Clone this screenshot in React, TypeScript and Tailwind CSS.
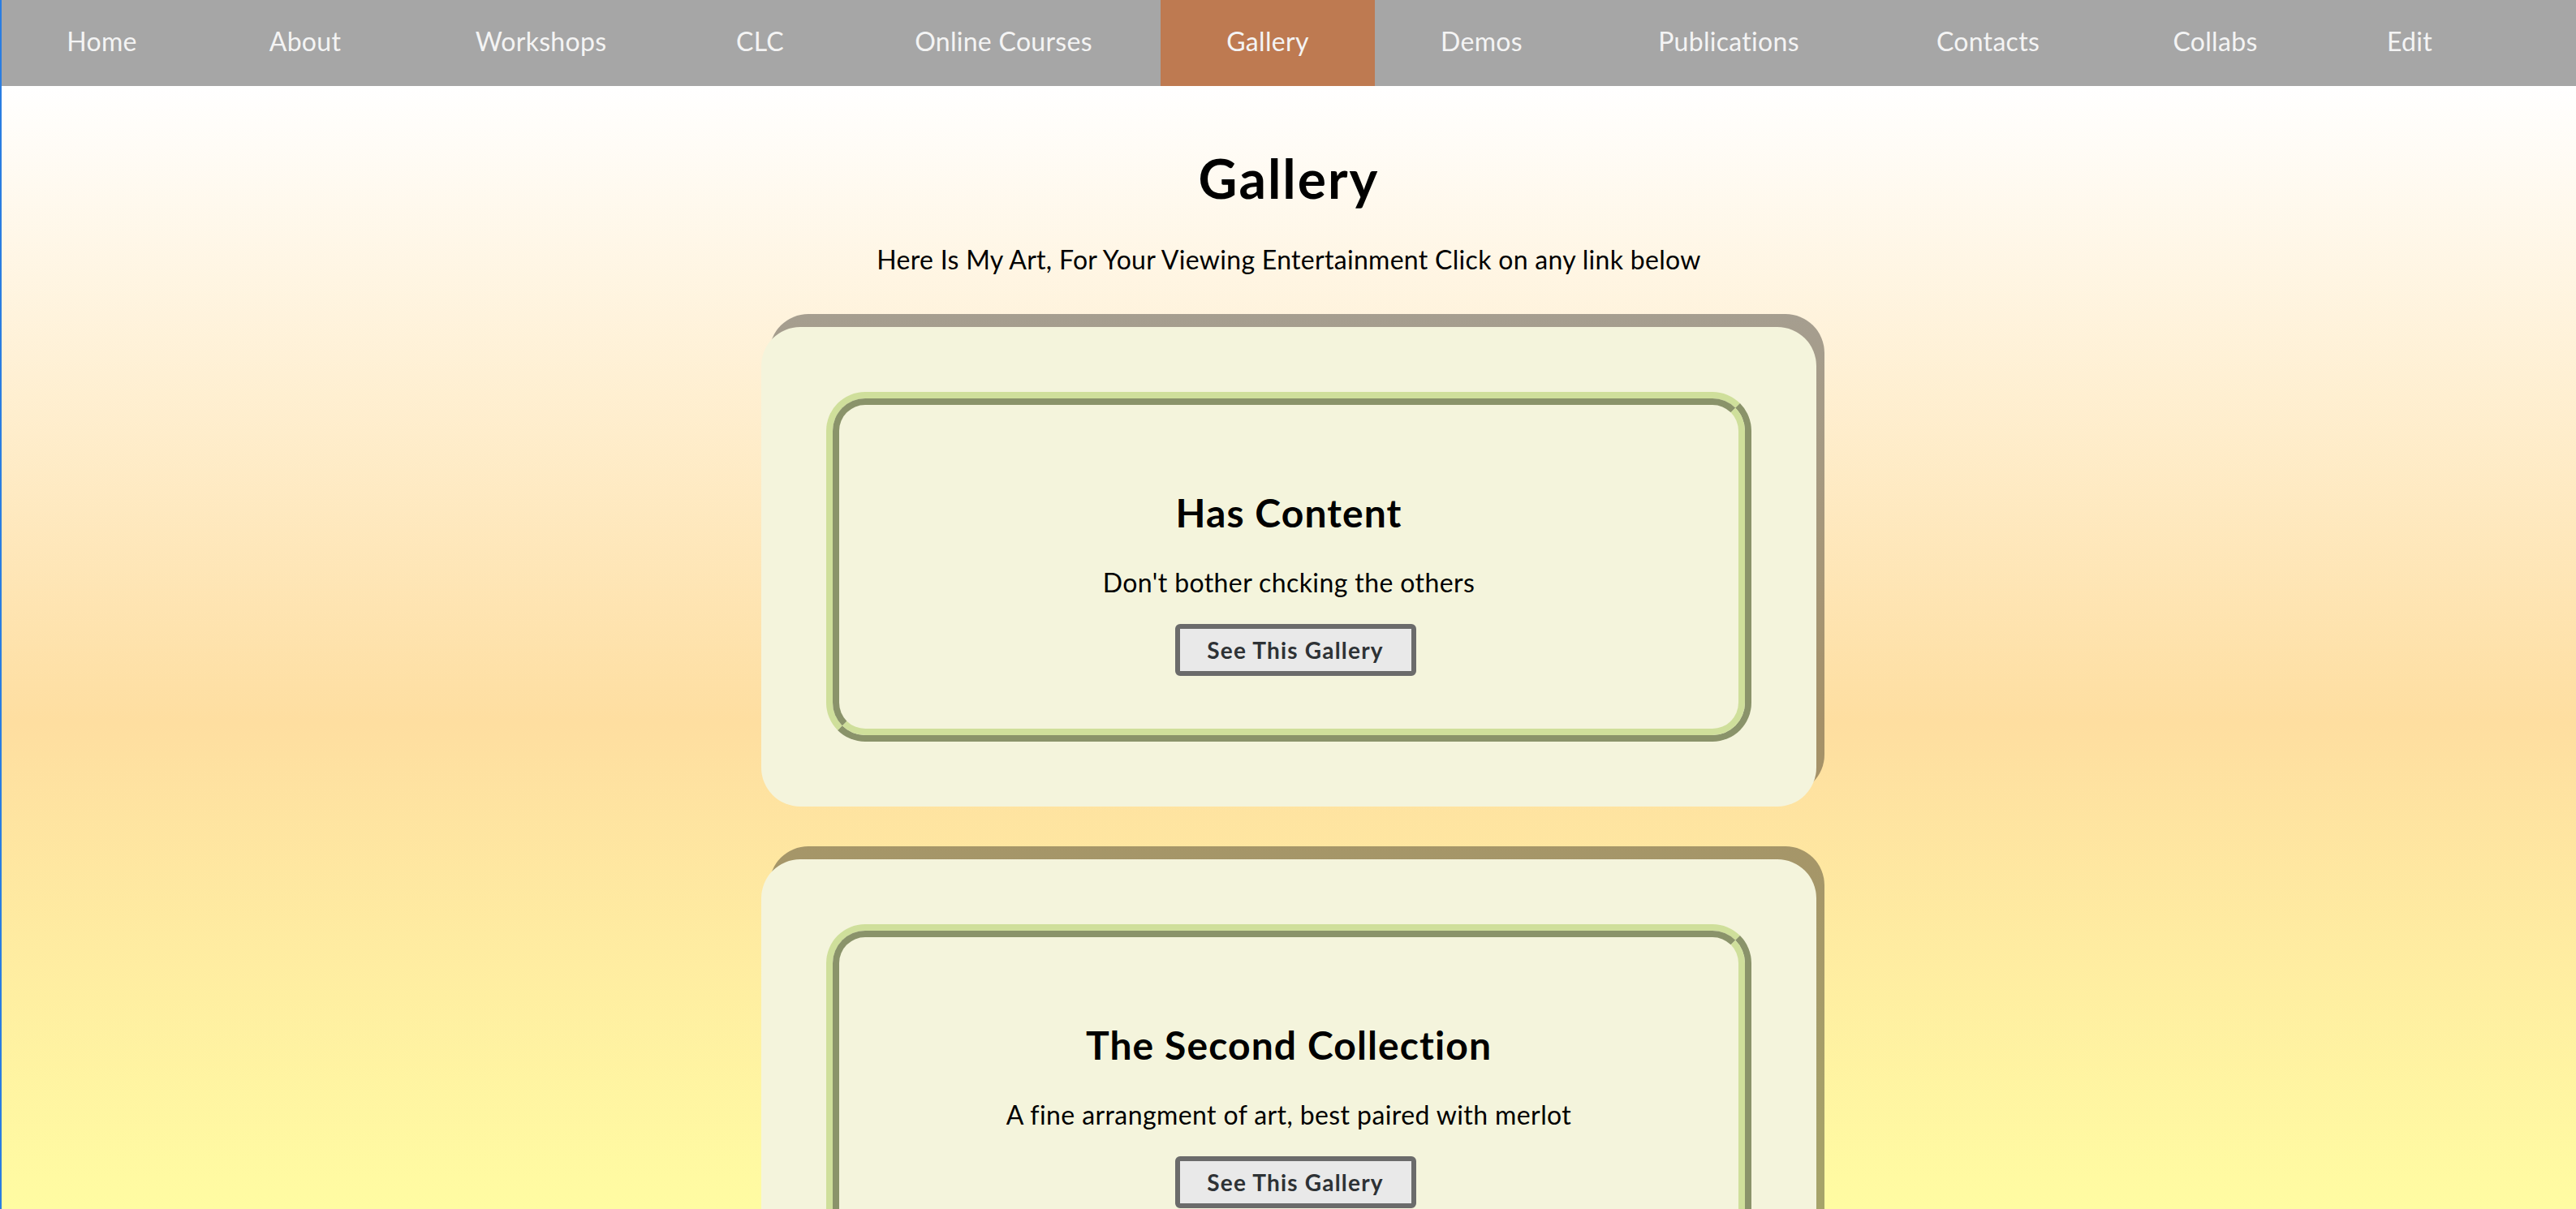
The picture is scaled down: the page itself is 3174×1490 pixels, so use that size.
import React from 'react';

const navItems: { label: string; width: string; active?: boolean }[] = [
  { label: 'Home', width: 'w-[247px]' },
  { label: 'About', width: 'w-[254px]' },
  { label: 'Workshops', width: 'w-[327px]' },
  { label: 'CLC', width: 'w-[213px]' },
  { label: 'Online Courses', width: 'w-[387px]' },
  { label: 'Gallery', width: 'w-[264px]', active: true },
  { label: 'Demos', width: 'w-[263px]' },
  { label: 'Publications', width: 'w-[346px]' },
  { label: 'Contacts', width: 'w-[293px]' },
  { label: 'Collabs', width: 'w-[267px]' },
  { label: 'Edit', width: 'w-[212px]' },
];

const galleries = [
  { title: 'Has Content', blurb: "Don't bother chcking the others" },
  { title: 'The Second Collection', blurb: 'A fine arrangment of art, best paired with merlot' },
];

function GalleryCard({ title, blurb, first }: { title: string; blurb: string; first: boolean }) {
  return (
    <section
      className={`${first ? 'mt-[63px]' : 'mt-[65px]'} mx-auto w-[1300px] rounded-[48px] bg-[#f4f4dc] p-[80px] shadow-[10px_-16px_0_rgba(0,0,0,0.35)]`}
    >
      {/* ridge-style frame */}
      <div className="rounded-[48px] border-8 border-t-[#cfdf9b] border-l-[#cfdf9b] border-b-[#8a936a] border-r-[#8a936a]">
        <div className="rounded-[40px] border-8 border-t-[#8a936a] border-l-[#8a936a] border-b-[#cfdf9b] border-r-[#cfdf9b] flex flex-col items-center pt-[105px] pb-[65px]">
          <h2 className="text-[48px] leading-[56px] font-bold tracking-[1.1px] text-black">{title}</h2>
          <p className="mt-[38px] text-[32px] leading-[40px] tracking-[0.4px] text-black">{blurb}</p>
          <button className="mt-[31px] ml-[16px] w-[297px] h-[64px] rounded-[6px] border-[6px] border-[#6b6b6b] bg-[#e9e9e9] text-[28px] font-bold tracking-[1.2px] text-[#2e3235]">
            See This Gallery
          </button>
        </div>
      </div>
    </section>
  );
}

export default function App() {
  return (
    <div className="min-h-screen border-l-2 border-[#2a7de1] font-['Lato',sans-serif] bg-[linear-gradient(180deg,#ffffff_0px,#ffffff_106px,#fedea0_890px,#fffca2_1490px)]">
      {/* Top navigation */}
      <nav className="flex h-[106px] bg-[#a6a6a6]">
        {navItems.map((item) => (
          <a
            key={item.label}
            href="#"
            className={`${item.width} text-center text-[32px] leading-[101px] tracking-[0.3px] text-[#f4f4f4] ${item.active ? 'bg-[#be7a51]' : ''}`}
          >
            {item.label}
          </a>
        ))}
      </nav>

      <main className="pb-[80px]">
        <h1 className="mt-[76px] text-center text-[66px] leading-[76px] font-bold tracking-[2px] text-black">Gallery</h1>
        <p className="mt-[42px] text-center text-[32px] leading-[40px] tracking-[0.3px] text-black">
          Here Is My Art, For Your Viewing Entertainment Click on any link below
        </p>

        {galleries.map((g, i) => (
          <GalleryCard key={g.title} title={g.title} blurb={g.blurb} first={i === 0} />
        ))}
      </main>
    </div>
  );
}
